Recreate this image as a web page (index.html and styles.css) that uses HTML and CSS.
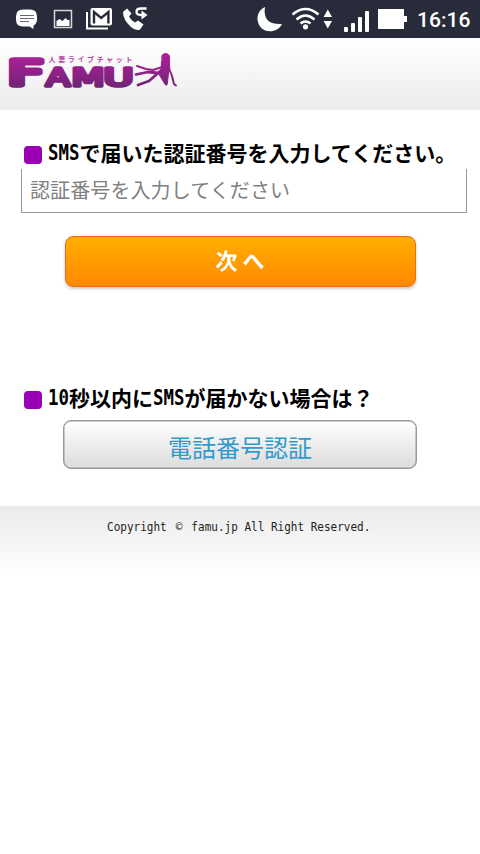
FILE: index.html
```html
<!DOCTYPE html>
<html lang="ja">
<head>
<meta charset="utf-8">
<title>FAMU</title>
<link rel="stylesheet" href="styles.css">
</head>
<body>
<div class="status">
  <svg width="480" height="38" viewBox="0 0 480 38" fill="#fff">
    <path d="M23 9.500h7q7 0 7 7v3q0 4-3.500 6v3.500l-4-2.500h-6.500q-7 0-7-7v-3q0-7 7-7z"/>
    <path d="M20 15.500h14M20 18.500h14M20 21.500h9" stroke="#666b78" stroke-width="1.100"/>
    <path d="M54.500 10.500h17v17h-17z" fill="none" stroke="#d5d7dc" stroke-width="1.500"/>
    <path d="M56.500 26v-5l3-2 3 2 3-3 2 2h2v6z"/>
    <path d="M87 12v16.500h21" fill="none" stroke="#fff" stroke-width="2"/>
    <rect x="90.500" y="8" width="21.500" height="17.500" rx="2"/>
    <path d="M94 23.500V12l7.200 6 7.200-6v11.500" fill="none" stroke="#282b3a" stroke-width="2.400"/>
    <path d="M123 12l4-3.500 4.500 5-2.500 3q2 4 6 6l3-2 5.500 4-3.500 5q-4 2-9-2.500-8-7-8-15z"/>
    <path d="M146.500 8.500h-5.500q-4.500 0-4.500 3.200t4.500 3.300h2" fill="none" stroke="#fff" stroke-width="2.300"/>
    <path d="M141.500 10.500l6 4.500-6 4.500z"/>
    <path d="M265 7q-3 18 17 17c-5 10-21 10-24-2-2-7 2-13 7-15z"/>
    <g fill="none" stroke="#fff" stroke-width="2.600"><path d="M292.500 14.500q13-11 26 0M296.500 19.500q9-8 18 0M300.500 23.500q5-4 10 0"/></g>
    <circle cx="305.500" cy="26.800" r="2.600"/>
    <path d="M327.800 9.500l4.200 7.500h-8.400zM327.800 28.500l4.200-7.500h-8.400z"/>
    <rect x="344" y="27" width="4" height="5" rx="1"/><rect x="351" y="23" width="4" height="9" rx="1"/><rect x="358" y="17" width="4" height="15" rx="1"/><rect x="365" y="11" width="4" height="21" rx="1"/>
    <path d="M378 9h26v7h3v6h-3v7h-26z"/>
    <text class="clock" x="417" y="26.700" textLength="53.500" lengthAdjust="spacingAndGlyphs">16:16</text>
  </svg>
</div>
<header class="header">
  <svg width="180" height="72" viewBox="0 38 180 72">
    <defs><linearGradient id="g" gradientUnits="userSpaceOnUse" x1="0" y1="54" x2="0" y2="88"><stop offset="0" stop-color="#b01f9c"/><stop offset="1" stop-color="#6f2474"/></linearGradient></defs>
    <g class="logo" fill="url(#g)" stroke="url(#g)">
      <text class="f" x="8" y="84.500" textLength="35" lengthAdjust="spacingAndGlyphs">F</text>
      <text x="46" y="85.500" textLength="24" lengthAdjust="spacingAndGlyphs">A</text>
      <text x="71.500" y="85.500" textLength="33" lengthAdjust="spacingAndGlyphs">M</text>
      <text x="103.500" y="85.500" textLength="30" lengthAdjust="spacingAndGlyphs">U</text>
    </g>
    <text class="tag" x="48.500" y="62" textLength="84">人妻ライブチャット</text>
    <g fill="url(#g)" stroke="url(#g)" stroke-linecap="round" stroke-linejoin="round">
      <ellipse cx="165.500" cy="57.500" rx="3.800" ry="4"/>
      <path d="M162.500 58q-2 6-1 10-2 3-4 4l8 13q2 1 2-3l1-9q2-4 1-9v-8z"/>
      <path d="M162 67l-9 3-7-1-9-3M168 66l4 10 2 8 2 1.500" fill="none" stroke-width="2"/>
      <path d="M158 73l-10-1-12 2.500M157 74l-8 7-11 4" fill="none" stroke-width="2.800"/>
    </g>
  </svg>
</header>
<main class="main">
  <h2 class="title"><i class="mark"></i><span class="lat sms">SMS</span><span class="jp">で届いた認証番号を入力してください。</span></h2>
  <input class="code" type="text" placeholder="認証番号を入力してください">
  <button class="next">次 へ</button>
  <h2 class="title second"><i class="mark"></i><span class="lat ten">10</span><span class="jp">秒以内に</span><span class="lat sms">SMS</span><span class="jp">が届かない場合は？</span></h2>
  <a class="tel">電話番号認証</a>
</main>
<footer class="footer"><p class="copy">Copyright <span class="c">©</span> famu.jp All Right Reserved.</p></footer>
</body>
</html>
```
FILE: styles.css
```css
* { box-sizing: border-box; }
body { margin: 0; background: #fff; color: #000; font-family: "Noto Sans CJK JP", sans-serif; overflow: hidden; height: 854px; }
svg { display: block; }
.status { height: 38px; background: #282b3a; }
.clock { font: 500 21px Roboto, sans-serif; }
.header { height: 72px; background: linear-gradient(#fff, #ececec); }
.logo { font: 25px "DejaVu Sans", sans-serif; stroke-width: 3.6; stroke-linejoin: round; }
.logo .f { font-size: 33px; stroke-width: 5.5; }
.tag { font: bold 7px "Noto Sans CJK JP", sans-serif; fill: #b84aa8; }
.main { height: 396px; padding: 27px 13px 0 21px; }
.title { display: flex; align-items: center; height: 32px; margin: 0; padding-left: 3px; font-size: 21px; line-height: 32px; font-weight: 700; white-space: nowrap; }
.mark { width: 18px; height: 18px; margin: 4px 6px 0 0; border-radius: 4px; background: #9a00b4; }
.jp { display: block; padding-bottom: 3px; }
.lat { display: block; font-family: "DejaVu Sans Mono", monospace; transform: scaleX(.83); transform-origin: 0 50%; }
.sms { width: 31.5px; }
.ten { width: 21px; }
.code { display: block; width: 446px; height: 44px; padding: 0 8px 3px; border: 1px solid #999; border-top: 0; border-radius: 0; outline: 0; background: #fff; font: 20px "Noto Sans CJK JP", sans-serif; letter-spacing: .1px; }
.code::placeholder { color: #808080; opacity: 1; }
.next { display: block; width: 351px; height: 51px; margin: 23px 0 0 43.500px; padding: 0 0 6px; border: 1px solid #ed6c1b; border-radius: 8px; background: linear-gradient(#ffae00, #ff8900); box-shadow: 0 2px 3px rgba(0,0,0,.2); color: #fff; font: bold 22px "Noto Sans CJK JP", sans-serif; }
.second { margin-top: 95px; }
.tel { display: block; width: 354px; height: 49px; margin: 6px 0 0 42px; padding-top: 2px; border: 1px solid #999; box-shadow: inset 0 0 0 .5px #999; border-radius: 8px; background: linear-gradient(#fff, #dcdcdc); color: #3399cc; font-size: 24px; line-height: 48px; text-align: center; }
.footer { height: 70px; padding: 12px 0 0 106.6px; background: linear-gradient(#ebebeb, #fff); }
.copy { display: flex; margin: 0; width: 400px; white-space: pre; font: 13px/18px "DejaVu Sans Mono", monospace; color: #222; transform: scaleX(.847); transform-origin: 0 0; }
.c { width: 13.5px; text-align: center; }
```
